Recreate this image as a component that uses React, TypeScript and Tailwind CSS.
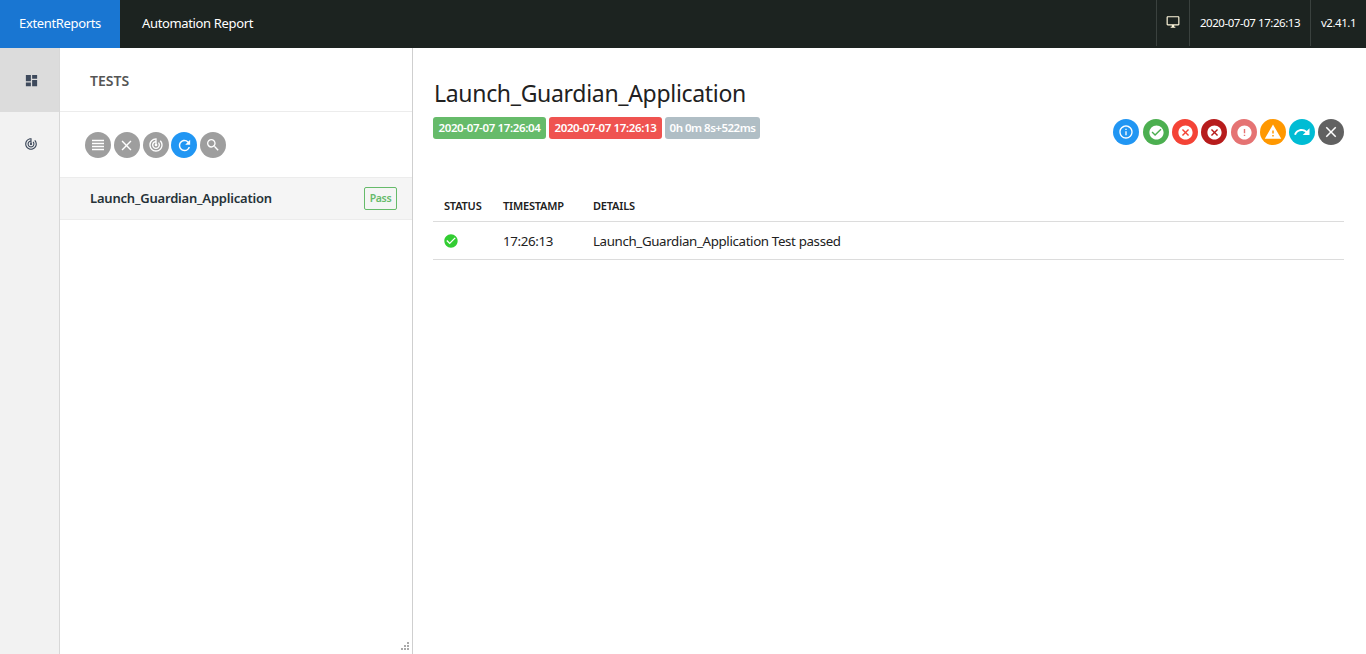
import { MdDashboard, MdTrackChanges, MdViewHeadline, MdClear, MdRefresh, MdSearch, MdOutlineDesktopWindows, MdInfoOutline, MdCheckCircle, MdCancel, MdError, MdWarning, MdRedo } from "react-icons/md";
import type { ReactNode } from "react";

const font = "[font-family:'Noto_Sans',sans-serif]";

function Circle({ bg, children, extra = "" }: { bg: string; children: ReactNode; extra?: string }) {
  return <span className={`flex h-[26px] w-[26px] shrink-0 items-center justify-center rounded-full text-white ${bg} ${extra}`}>{children}</span>;
}

export default function App() {
  return (
    <div className={`flex h-screen flex-col overflow-hidden bg-white text-[14px] text-[#212121] ${font} tracking-[-0.35px]`}>
      <header className="flex h-12 shrink-0 items-center bg-[#1c2320] text-[13px] text-white">
        <div className="flex h-12 w-[120px] items-center justify-center bg-[#1976d2]">ExtentReports</div>
        <div className="ml-[22px] flex-1">Automation Report</div>
        <div className="flex h-[46px] self-start text-[11.5px] tracking-[-0.45px]">
          <div className="flex w-[33px] items-center justify-center border-l border-[#3a413e]"><MdOutlineDesktopWindows size={14} className="-mt-0.5 text-[#fff8dc]" /></div>
          <div className="flex w-[121px] items-center justify-center border-l border-[#3a413e]">2020-07-07 17:26:13</div>
          <div className="flex w-[56px] items-center justify-center border-l border-[#3a413e]">v2.41.1</div>
        </div>
      </header>
      <div className="flex min-h-0 flex-1">
        <aside className="w-[60px] shrink-0 border-r border-[#d8d8d8] bg-[#f2f2f2]">
          <div className="flex h-16 items-center justify-center bg-[#dcdcdc] pl-[3px]"><MdDashboard size={15} className="text-[#3e4a5c]" /></div>
          <div className="flex h-16 items-center justify-center pl-[3px]"><MdTrackChanges size={14} className="text-[#3e4a5c]" /></div>
        </aside>
        <section className="relative w-[353px] shrink-0 border-r border-[#cfcfcf]">
          <div className="flex h-16 items-center border-b border-[#ececec] pl-[30px] pt-[2px] text-[14px] font-semibold tracking-normal text-[#555]">TESTS</div>
          <div className="flex h-[65px] items-center gap-[2.8px] pl-[25px] pt-[1px]">
            <Circle bg="bg-[#9e9e9e]"><MdViewHeadline size={18} /></Circle>
            <Circle bg="bg-[#9e9e9e]"><MdClear size={17} /></Circle>
            <Circle bg="bg-[#9e9e9e]"><MdTrackChanges size={16} /></Circle>
            <Circle bg="bg-[#2196f3]"><MdRefresh size={17} /></Circle>
            <Circle bg="bg-[#9e9e9e]"><MdSearch size={16} /></Circle>
          </div>
          <div className="flex h-[43px] items-center justify-between border-y border-[#ececec] bg-[#f5f5f5] pl-[30px] pr-[15px]">
            <span className="text-[13px] font-semibold tracking-[-0.2px] text-[#263238]">Launch_Guardian_Application</span>
            <span className="flex h-[23px] w-[33px] items-center justify-center rounded-[2px] border border-[#66bb6a] text-[10.5px] font-semibold text-[#66bb6a]">Pass</span>
          </div>
          <svg className="absolute right-[2px] bottom-[3px]" width="9" height="9" viewBox="0 0 9 9" fill="#aaa">
            <rect x="6" y="0" width="2" height="2" /><rect x="3" y="3" width="2" height="2" /><rect x="6" y="3" width="2" height="2" />
            <rect x="0" y="6" width="2" height="2" /><rect x="3" y="6" width="2" height="2" /><rect x="6" y="6" width="2" height="2" />
          </svg>
        </section>
        <main className="min-w-0 flex-1 pl-5 pr-[22px] pt-[29px]">
          <div className="flex items-start justify-between">
            <div>
              <h1 className="ml-px text-[23px] leading-[32px] font-normal tracking-[-0.31px]">Launch_Guardian_Application</h1>
              <div className="mt-2 flex gap-[3px] text-[11.5px] font-semibold text-white">
                <span className="flex h-[22px] w-[113px] items-center justify-center rounded-[3px] bg-[#66bb6a]">2020-07-07 17:26:04</span>
                <span className="flex h-[22px] w-[113px] items-center justify-center rounded-[3px] bg-[#ef5350]">2020-07-07 17:26:13</span>
                <span className="flex h-[22px] w-[95px] items-center justify-center rounded-[3px] bg-[#b0bec5] tracking-[-0.5px]">0h 0m 8s+522ms</span>
              </div>
            </div>
            <div className="mt-[42px] flex gap-[3px]">
              <Circle bg="bg-[#2196f3]"><MdInfoOutline size={16} /></Circle>
              <Circle bg="bg-[#4caf50]" extra="ml-px"><MdCheckCircle size={17} /></Circle>
              <Circle bg="bg-[#f44336]"><MdCancel size={17} /></Circle>
              <Circle bg="bg-[#b71c1c]"><MdCancel size={17} /></Circle>
              <Circle bg="bg-[#e57373]" extra="ml-px"><MdError size={17} /></Circle>
              <Circle bg="bg-[#ff9800]"><MdWarning size={18} /></Circle>
              <Circle bg="bg-[#00bcd4]"><MdRedo size={18} /></Circle>
              <Circle bg="bg-[#616161]"><MdClear size={18} /></Circle>
            </div>
          </div>
          <table className="mt-[46px] w-full border-collapse text-left">
            <thead>
              <tr className="h-[30px] border-b border-[#dcdcdc] text-[11px] font-semibold tracking-[-0.2px] uppercase">
                <th className="w-[60px] pl-[11px] font-semibold">Status</th>
                <th className="w-[90px] pl-[10px] font-semibold">Timestamp</th>
                <th className="pl-[10px] font-semibold">Details</th>
              </tr>
            </thead>
            <tbody>
              <tr className="h-[38px] border-b border-[#dcdcdc] text-[13.3px]">
                <td className="pl-[10px] pt-[2px]"><MdCheckCircle size={16} className="text-[#32cd32]" /></td>
                <td className="pl-[10px] pt-[3px]">17:26:13</td>
                <td className="pl-[10px] pt-[3px]">Launch_Guardian_Application Test passed</td>
              </tr>
            </tbody>
          </table>
        </main>
      </div>
    </div>
  );
}
